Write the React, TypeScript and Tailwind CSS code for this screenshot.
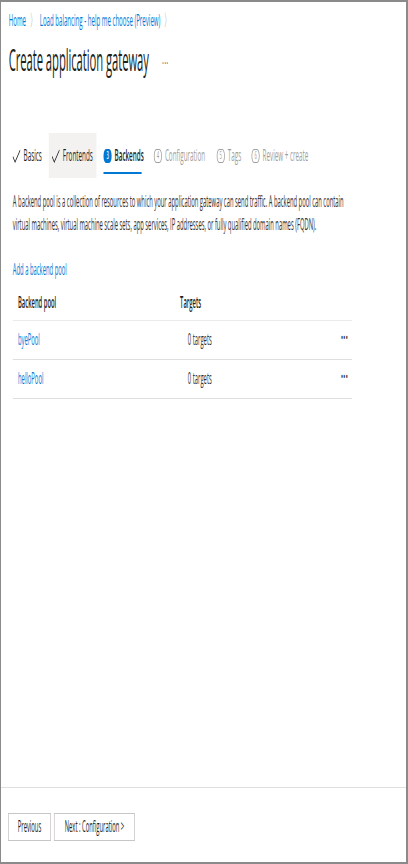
import React from 'react';

const font = { fontFamily: '"Open Sans", "Noto Sans", sans-serif' };

type Step = {
  label: string;
  state: 'done' | 'current' | 'todo';
  num: number;
  box: string;
};

// each tab gets its own width so the steps line up like the wizard header
const steps: Step[] = [
  { label: 'Basics', state: 'done', num: 1, box: 'w-[106px] pl-[8px]' },
  { label: 'Frontends', state: 'done', num: 2, box: 'w-[129px] pl-[8px] bg-[#f3f2f1]' },
  { label: 'Backends', state: 'current', num: 3, box: 'w-[138px] pl-[19px]' },
  { label: 'Configuration', state: 'todo', num: 4, box: 'w-[170px] pl-[17px]' },
  { label: 'Tags', state: 'todo', num: 5, box: 'w-[94px] pl-[17px]' },
  { label: 'Review + create', state: 'todo', num: 6, box: 'w-[200px] pl-[17px]' },
];

const pools = [
  { name: 'byePool', targets: '0 targets' },
  { name: 'helloPool', targets: '0 targets' },
];

const Check = () => (
  <svg width="22" height="14" viewBox="0 0 22 14" fill="none">
    <polyline points="1,7.5 7,13 21,1" stroke="#201f1e" strokeWidth="1.6" />
  </svg>
);

const StepMark = ({ step }: { step: Step }) => {
  if (step.state === 'done') return <Check />;
  if (step.state === 'current') {
    return (
      <span className="flex h-[14px] w-[22px] items-center justify-center rounded-full bg-[#0078d4] text-[11px] font-semibold text-white">
        {step.num}
      </span>
    );
  }
  return (
    <span className="flex h-[14px] w-[22px] items-center justify-center rounded-full border border-x-[2px] border-[#a19f9d] text-[11px] text-[#a19f9d]">
      {step.num}
    </span>
  );
};

const App = () => {
  return (
    <div
      className="h-[864px] w-[408px] overflow-hidden border-t-2 border-b-2 border-l border-r-2 border-[#8a8a8a] bg-white"
      style={font}
    >
      <div className="flex h-full w-[1095px] origin-top-left scale-x-[0.37] flex-col text-[#323130]">
        <div className="flex-1">
          {/* breadcrumb */}
          <div className="mt-[8px] flex h-[20px] items-center gap-[10px] pl-[21px] text-[16.5px] leading-[20px]">
            <span className="text-[#0078d4]">Home</span>
            <span className="text-[#8a8886]">〉</span>
            <span className="text-[#0078d4]">Load balancing - help me choose (Preview)</span>
            <span className="text-[#8a8886]">〉</span>
          </div>

          {/* title */}
          <div className="mt-[12px] flex h-[34px] items-center pl-[21px]">
            <h1 className="text-[30.5px] leading-[34px] tracking-[-0.2px] text-[#201f1e]">
              Create application gateway
            </h1>
            <span className="ml-[36px] mt-[6px] text-[15px] tracking-[2px] text-[#323130]">···</span>
          </div>

          {/* wizard tabs */}
          <div className="mt-[57px] flex h-[45px] items-stretch pl-[23px] text-[17px]">
            {steps.map((s) => (
              <div key={s.label} className={`relative flex shrink-0 items-center gap-[8px] ${s.box}`}>
                <StepMark step={s} />
                <span
                  className={`-mt-[2px] whitespace-nowrap ${s.state === 'todo' ? 'text-[#a19f9d]' : 'text-[#201f1e]'} ${
                    s.state === 'current' ? 'font-semibold' : ''
                  }`}
                >
                  {s.label}
                </span>
                {s.state === 'current' && (
                  <span className="absolute bottom-[4px] left-[19px] w-[103px] h-[2px] bg-[#0078d4]" />
                )}
              </div>
            ))}
          </div>

          {/* description */}
          <p className="mt-[12px] pl-[32px] text-[15.8px] leading-[23px]">
            A backend pool is a collection of resources to which your application gateway can send traffic. A
            backend pool can contain
            <br />
            virtual machines, virtual machine scale sets, app services, IP addresses, or fully qualified domain names
            (FQDN).
          </p>

          <div className="mt-[23px] h-[20px] pl-[32px] text-[15.8px] leading-[20px] text-[#0078d4]">
            Add a backend pool
          </div>

          {/* table */}
          <div className="ml-[32px] mt-[6px] w-[917px] text-[15.8px]">
            <div className="flex h-[36px] items-center border-b border-[#edebe9] font-semibold text-[#201f1e]">
              <span className="w-[452px] pl-[14px]">Backend pool</span>
              <span>Targets</span>
            </div>
            {pools.map((p) => (
              <div key={p.name} className="flex h-[39px] items-center border-b border-[#e1dfdd]">
                <span className="w-[473px] pl-[14px] text-[#0078d4]">{p.name}</span>
                <span className="flex-1">{p.targets}</span>
                <span className="mr-[11px] -mt-[6px] text-[19px] font-bold tracking-[1px] text-[#323130]">···</span>
              </div>
            ))}
          </div>
        </div>

        {/* footer */}
        <div className="flex h-[75px] gap-[8px] border-t border-[#e1dfdd] pl-[19px] pt-[25px] text-[15.8px]">
          <button className="h-[28px] w-[116px] border border-x-[2px] border-[#c8c6c4] bg-white text-[#201f1e]">
            Previous
          </button>
          <button className="h-[28px] w-[219px] border border-x-[2px] border-[#c8c6c4] bg-white text-[#201f1e]">
            Next : Configuration &gt;
          </button>
        </div>
      </div>
    </div>
  );
};

export default App;
